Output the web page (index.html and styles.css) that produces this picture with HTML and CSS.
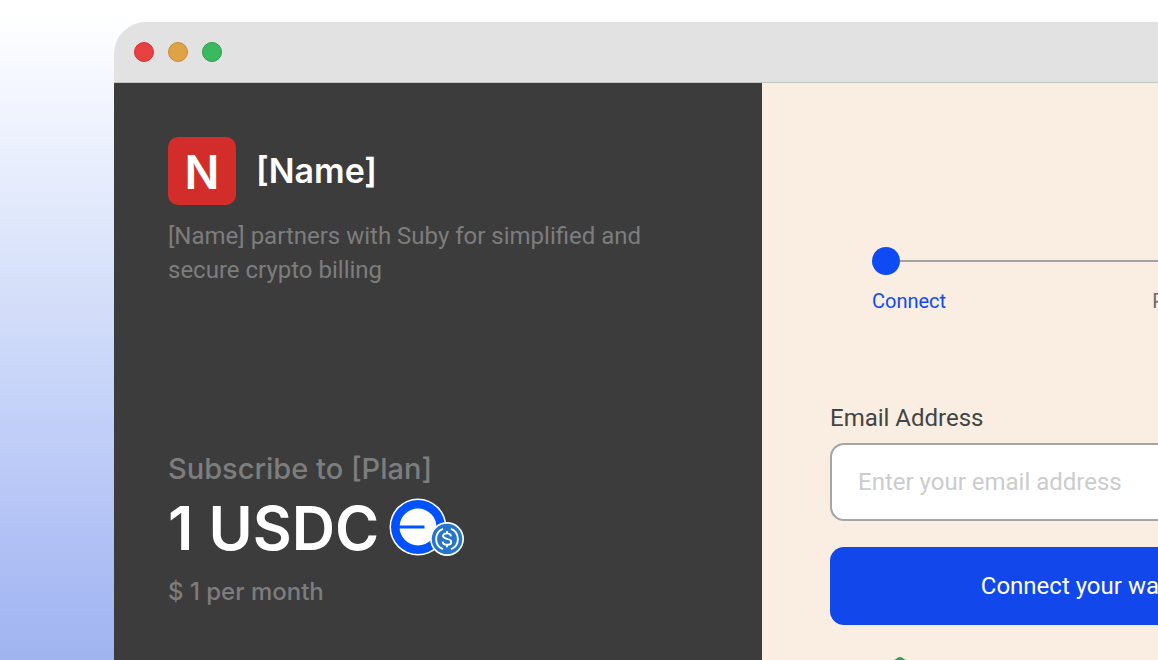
FILE: index.html
```
<!DOCTYPE html>
<html lang="en">
<head>
  <meta charset="UTF-8">
  <meta name="viewport" content="width=device-width, initial-scale=1.0">
  <title>Subscribe - Suby</title>

  <link rel="stylesheet" href="styles.css">
</head>
<body>
  <div class="window">
    <div class="title-bar">
      <span class="light red"></span>
      <span class="light yellow"></span>
      <span class="light green"></span>
    </div>
    <div class="content">
      <section class="summary">
        <div class="brand">
          <div class="logo">N</div>
          <h1>[Name]</h1>
        </div>
        <p class="about">[Name] partners with Suby for simplified and secure crypto billing</p>
        <h2>Subscribe to [Plan]</h2>
        <div class="price">
          <span>1 USDC</span>
          <svg class="coins" width="76" height="60" viewBox="0 0 76 60" aria-hidden="true">
            <circle cx="29" cy="29" r="28.5" fill="#fff"/>
            <circle cx="29" cy="29" r="27" fill="#0052ff"/>
            <circle cx="29" cy="29" r="18.5" fill="#fff"/>
            <path d="M10 27.500h25.500v3h-25.500z" fill="#0052ff"/>
            <circle cx="58" cy="41" r="17" fill="#fff"/>
            <circle cx="58" cy="41" r="15.300" fill="#2775ca"/>
            <g fill="none" stroke="#fff" stroke-width="1.900">
              <path d="M54 30.800a11 11 0 0 0 0 20.400M62 30.800a11 11 0 0 1 0 20.400"/>
              <path d="M62 38.300c-.2-2-1.700-2.900-4-2.900-2.400 0-3.900 1-3.900 2.700 0 4 8.100 1.600 8.100 5.800 0 1.800-1.600 2.900-4.200 2.900-2.500 0-4.200-1.100-4.300-3.200M58 33v2.600M58 46.500v2.700"/>
            </g>
          </svg>
        </div>
        <p class="period">$ 1 per month</p>
      </section>
      <section class="checkout">
        <div class="stepper">
          <div class="track">
            <span class="dot"></span>
            <span class="line"></span>
            <span class="dot next"></span>
          </div>
          <div class="steps">
            <span class="active">Connect</span>
            <span>Payment method</span>
          </div>
        </div>
        <form>
          <label for="email">Email Address</label>
          <input type="email" id="email" placeholder="Enter your email address">
          <button type="button">Connect your wallet</button>
        </form>
        <svg class="shield" width="28" height="32" viewBox="0 0 28 32" aria-hidden="true">
          <path d="M14 0q2 0 4 2l8 4v10q0 10-12 16q-12-6-12-16v-10l8-4q2-2 4-2z" fill="#2f9e5b"/>
        </svg>
      </section>
    </div>
  </div>
</body>
</html>
```
FILE: styles.css
```
* {
    box-sizing: border-box;
}
body {
    margin: 0;
    height: 100vh;
    overflow: hidden;
    font-family: Roboto, Arial, sans-serif;
    background: linear-gradient(#fff 2%, #f4f7ff 13%, #d7e1fa 42%, #c1cff8 65%, #a6b8f3 93%, #a0b5f0 100%);
}
h1, h2, p {
    margin: 0;
}
.window {
    display: flex;
    flex-direction: column;
    width: calc(100vw + 138px);
    min-height: 100vh;
    margin: 22px 0 0 114px;
    border-radius: 32px 0 0 0;
    overflow: hidden;
}
.title-bar {
    display: flex;
    align-items: center;
    gap: 14px;
    height: 61px;
    padding-left: 20px;
    background: #e2e2e2;
    border-bottom: 1px solid #c4c4c4;
}
.light {
    width: 20px;
    height: 20px;
    border-radius: 50%;
    border: 1px solid;
}
.red {
    background: #e84142;
    border-color: #d32f2f;
}
.yellow {
    background: #dfa347;
    border-color: #c78a35;
}
.green {
    background: #3aba5e;
    border-color: #2f9a4b;
}
.content {
    flex: 1;
    display: grid;
    grid-template-columns: 1fr 1fr;
}
.summary {
    padding: 54px;
    background: #3c3c3c;
    color: #7d7d7d;
}
.brand {
    display: flex;
    align-items: center;
    gap: 20px;
    color: #fff;
}
.logo {
    width: 68px;
    height: 68px;
    border-radius: 10px;
    background: #d22d2a;
    font: 600 46px/70px Inter, sans-serif;
    text-align: center;
}
h1 {
    font: 600 34px/44px Inter, sans-serif;
}
.about {
    margin-top: 14px;
    font-size: 24px;
    line-height: 34px;
}
h2 {
    margin-top: 162px;
    font: 500 29px/40px Inter, sans-serif;
}
.price {
    display: flex;
    align-items: center;
    gap: 10px;
    height: 78px;
    color: #fff;
    font: 600 60px/78px Inter, sans-serif;
}
.period {
    margin-top: 9px;
    font: 500 24px/32px Inter, sans-serif;
}
.checkout {
    padding: 164px 68px 32px;
    background: #faede1;
}
.stepper {
    padding: 0 38px 0 42px;
}
.track {
    display: flex;
    align-items: center;
}
.dot {
    width: 28px;
    height: 28px;
    border-radius: 50%;
    background: #0f4bf5;
}
.line {
    flex: 1;
    height: 2px;
    background: #a5a5a5;
}
.next {
    background: #a5a5a5;
}
.steps {
    display: flex;
    justify-content: space-between;
    margin-top: 14px;
    color: #6b6b6b;
    font-size: 20px;
    line-height: 24px;
}
.active {
    color: #0f4bf5;
}
form {
    display: flex;
    flex-direction: column;
    margin-top: 88px;
}
label {
    color: #444;
    font-size: 24px;
    line-height: 34px;
}
input {
    height: 78px;
    margin-top: 8px;
    padding: 0 26px;
    border: 2px solid #a5a5a5;
    border-radius: 14px;
    background: #fff;
    font: 24px Roboto, Arial, sans-serif;
}
input::placeholder {
    color: #ccc;
}
button {
    height: 78px;
    margin-top: 26px;
    border: none;
    border-radius: 14px;
    background: #1247ec;
    color: #fff;
    font: 24px Roboto, Arial, sans-serif;
    cursor: pointer;
}
.shield {
    display: block;
    margin: 32px 0 0 56px;
}
```
